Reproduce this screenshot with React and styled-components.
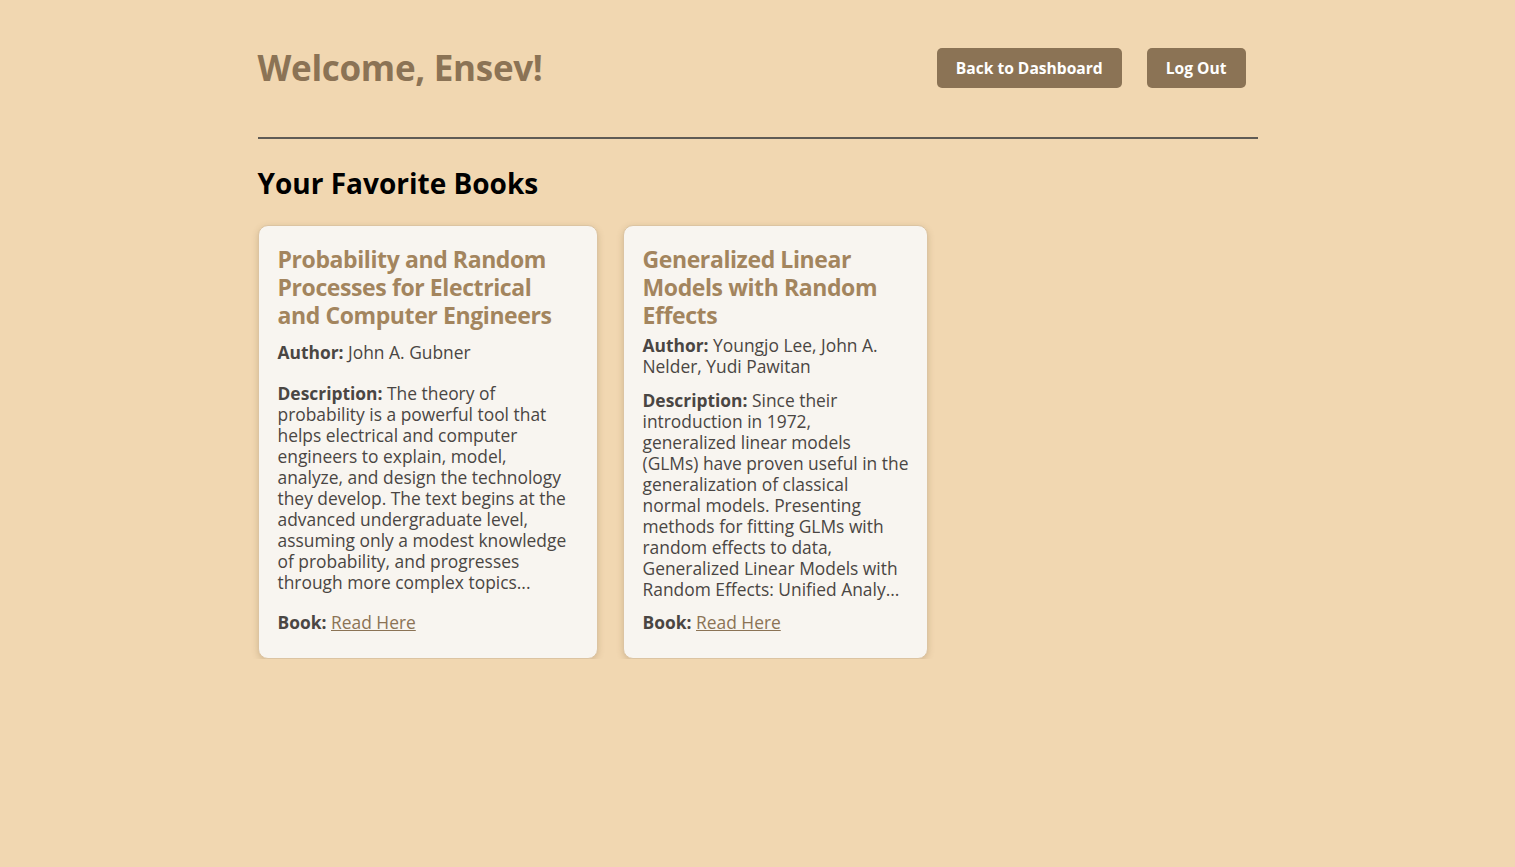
import styled, { createGlobalStyle } from 'styled-components';

const GlobalStyle = createGlobalStyle`
    body {
        margin: 0;
        background: #f1d7b1;
        font-family: "Open Sans", "Liberation Sans", sans-serif;
    }
`

const Page = styled.div`
    width: 1000px;
    margin: 0 auto;
    padding-top: 44px;
`

const Header = styled.header`
    display: flex;
    justify-content: space-between;
    align-items: center;
    padding-right: 12px;
    padding-bottom: 46px;
    border-bottom: 2px solid #605b55;
`

const Title = styled.h1`
    margin: 0;
    font-size: 35px;
    letter-spacing: -0.3px;
    font-weight: 700;
    color: #8b7355;
`

const Actions = styled.div`
    display: flex;
    gap: 25px;
`

const Button = styled.button`
    height: 40px;
    padding: 0 19px;
    border: none;
    border-radius: 5px;
    background: #8b7355;
    color: #fff;
    font-family: inherit;
    font-size: 15.6px;
    font-weight: 700;
    cursor: pointer;
`

const SectionTitle = styled.h2`
    margin: 25px 0 23px;
    font-size: 28px;
    font-weight: 700;
    color: #000;
`

const CardRow = styled.div`
    display: flex;
    gap: 25px;
    align-items: stretch;
`

const Card = styled.div`
    box-sizing: border-box;
    display: flex;
    flex-direction: column;
    justify-content: space-between;
    width: ${p => p.$width}px;
    padding: 19px 19px 25px;
    background: #f8f5f0;
    border: 1px solid #dcc4a2;
    border-radius: 10px;
    box-shadow: 0 2px 6px rgba(120, 90, 50, 0.25);
    color: #4a4643;
    font-size: 17.4px;
    line-height: 21px;
`

const BookTitle = styled.h3`
    margin: 0;
    font-size: 23px;
    letter-spacing: -0.4px;
    line-height: 28px;
    font-weight: 700;
    color: #a3855e;
`

const Field = styled.p`
    margin: ${p => p.$top}px 0 0;
`

const Line = styled.span`
    display: block;
    white-space: nowrap;
`

const Label = styled.strong`
    font-weight: 700;
`

const ReadLink = styled.a`
    color: #8b7355;
    text-decoration: underline;
`

const books = [
    {
        title: ['Probability and Random', 'Processes for Electrical', 'and Computer Engineers'],
        author: ['John A. Gubner'],
        description: [
            'The theory of',
            'probability is a powerful tool that',
            'helps electrical and computer',
            'engineers to explain, model,',
            'analyze, and design the technology',
            'they develop. The text begins at the',
            'advanced undergraduate level,',
            'assuming only a modest knowledge',
            'of probability, and progresses',
            'through more complex topics...',
        ],
        width: 340,
    },
    {
        title: ['Generalized Linear', 'Models with Random', 'Effects'],
        author: ['Youngjo Lee, John A.', 'Nelder, Yudi Pawitan'],
        description: [
            'Since their',
            'introduction in 1972,',
            'generalized linear models',
            '(GLMs) have proven useful in the',
            'generalization of classical',
            'normal models. Presenting',
            'methods for fitting GLMs with',
            'random effects to data,',
            'Generalized Linear Models with',
            'Random Effects: Unified Analy...',
        ],
        width: 305,
    },
]

function Lines({ label, lines }) {
    return lines.map((line, i) => (
        <Line key={i}>
            {i === 0 && label && <><Label>{label}</Label> </>}
            {line}
        </Line>
    ))
}

export default function App() {
    return (
        <>
            <GlobalStyle />
            <Page>
                <Header>
                    <Title>Welcome, Ensev!</Title>
                    <Actions>
                        <Button>Back to Dashboard</Button>
                        <Button>Log Out</Button>
                    </Actions>
                </Header>

                <SectionTitle>Your Favorite Books</SectionTitle>

                <CardRow>
                    {books.map(book => (
                        <Card key={book.title[0]} $width={book.width}>
                            <BookTitle><Lines lines={book.title} /></BookTitle>
                            <Field $top={6}><Lines label="Author:" lines={book.author} /></Field>
                            <Field $top={13}><Lines label="Description:" lines={book.description} /></Field>
                            <Field $top={12}><Label>Book:</Label> <ReadLink href="#">Read Here</ReadLink></Field>
                        </Card>
                    ))}
                </CardRow>
            </Page>
        </>
    )
}
